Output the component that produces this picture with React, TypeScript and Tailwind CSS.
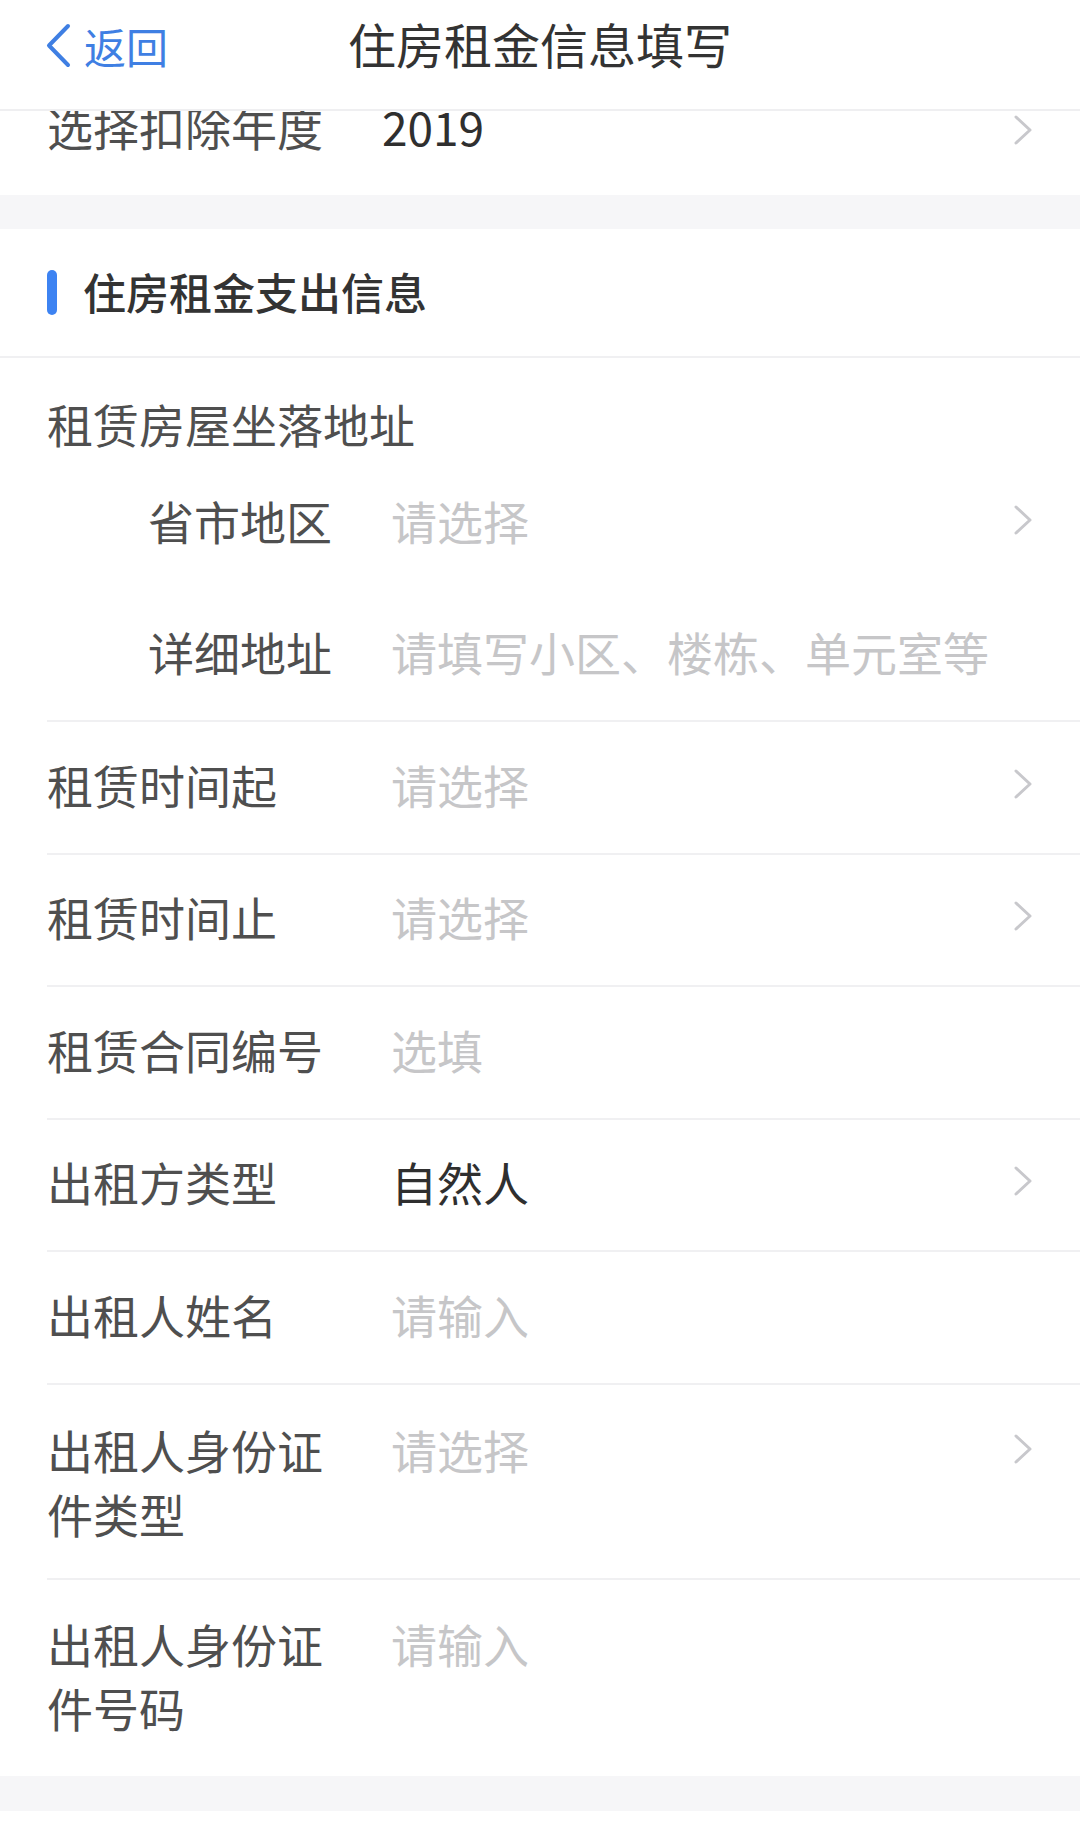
import React from "react";

const FONT = { fontFamily: '"Noto Sans CJK SC", "Noto Sans", sans-serif' };

function Chevron() {
  return (
    <svg width="22" height="32" viewBox="0 0 22 32" className="shrink-0">
      <path d="M4 3 L18 16 L4 29" fill="none" stroke="#c8c8cc" strokeWidth="3" strokeLinecap="round" strokeLinejoin="round" />
    </svg>
  );
}

type RowProps = { label: string; value: string; placeholder?: boolean; arrow?: boolean; sub?: boolean; border?: boolean };

function Row({ label, value, placeholder = true, arrow = false, sub = false, border = true }: RowProps) {
  return (
    <div className={`ml-[47px] h-[132.5px] flex items-center pr-[46px] pb-[7px] ${border ? "border-b-2 border-[#f0f0f2]" : ""}`}>
      <div className={`w-[344px] shrink-0 text-[46px] leading-[62px] text-[#4f4f4f] ${sub ? "pl-[101px]" : ""}`}>{label}</div>
      <div className={`flex-1 text-[46px] leading-[62px] whitespace-nowrap ${placeholder ? "text-[#c6c6c8]" : "text-[#2f2f2f]"}`}>{value}</div>
      {arrow && <Chevron />}
    </div>
  );
}

function TwoLineRow({ label, value, arrow = false, border = true, top }: { label: string; value: string; arrow?: boolean; border?: boolean; top: string }) {
  return (
    <div className={`ml-[47px] ${top} flex items-start pr-[46px] ${border ? "border-b-2 border-[#f0f0f2]" : ""}`}>
      <div className="w-[344px] shrink-0 pr-[44px] text-[46px] leading-[64px] text-[#4f4f4f]">{label}</div>
      <div className="flex-1 text-[46px] leading-[64px] text-[#c6c6c8] whitespace-nowrap">{value}</div>
      {arrow && (
        <div className="h-[64px] flex items-center">
          <Chevron />
        </div>
      )}
    </div>
  );
}

export default function App() {
  return (
    <div className="w-[1080px] h-[1822px] bg-white overflow-hidden" style={FONT}>
      {/* Header */}
      <div className="relative z-10 h-[111px] bg-white border-b-2 border-[#efeff1] grid grid-cols-[1fr_auto_1fr] items-start">
        <div className="flex items-center pl-[44px] pt-[23px] gap-[12px]">
          <svg width="28" height="45" viewBox="0 0 28 45">
            <path d="M24 3 L5 22.5 L24 42" fill="none" stroke="#3f7fe3" strokeWidth="4" strokeLinecap="round" strokeLinejoin="round" />
          </svg>
          <span className="text-[42px] leading-[45px] text-[#3f7fe3]">返回</span>
        </div>
        <div className="pt-[14px] text-[48px] leading-[58px] text-[#333333]">住房租金信息填写</div>
        <div />
      </div>

      {/* Partially scrolled row */}
      <div className="h-[84px] overflow-hidden">
        <div className="h-[133px] -mt-[52px] flex items-center pl-[47px] pr-[46px]">
          <div className="w-[335px] shrink-0 text-[46px] leading-[62px] text-[#4f4f4f]">选择扣除年度</div>
          <div className="flex-1 text-[46px] leading-[62px] text-[#2f2f2f]">2019</div>
          <div className="pt-[8px]">
            <Chevron />
          </div>
        </div>
      </div>

      <div className="h-[34px] bg-[#f6f6f8]" />

      {/* Section header */}
      <div className="h-[129px] flex items-center pl-[47px] border-b-2 border-[#f0f0f2]">
        <div className="w-[10px] h-[45px] rounded-full bg-[#3d83f2]" />
        <div className="ml-[26px] text-[43px] leading-[56px] font-medium text-[#333333] pb-[4px]">住房租金支出信息</div>
      </div>

      {/* Address block */}
      <div className="pt-[34px]">
        <div className="pl-[47px] text-[46px] leading-[62px] text-[#4f4f4f] mb-[3px]">租赁房屋坐落地址</div>
        <Row label="省市地区" value="请选择" arrow sub border={false} />
        <Row label="详细地址" value="请填写小区、楼栋、单元室等" sub />
      </div>

      <Row label="租赁时间起" value="请选择" arrow />
      <Row label="租赁时间止" value="请选择" arrow />
      <Row label="租赁合同编号" value="选填" />
      <Row label="出租方类型" value="自然人" placeholder={false} arrow />
      <Row label="出租人姓名" value="请输入" />
      <TwoLineRow label="出租人身份证件类型" value="请选择" arrow top="pt-[32px] pb-[33px]" />
      <TwoLineRow label="出租人身份证件号码" value="请输入" border={false} top="pt-[31px] pb-[37px]" />

      <div className="h-[35px] bg-[#f6f6f8]" />
    </div>
  );
}
